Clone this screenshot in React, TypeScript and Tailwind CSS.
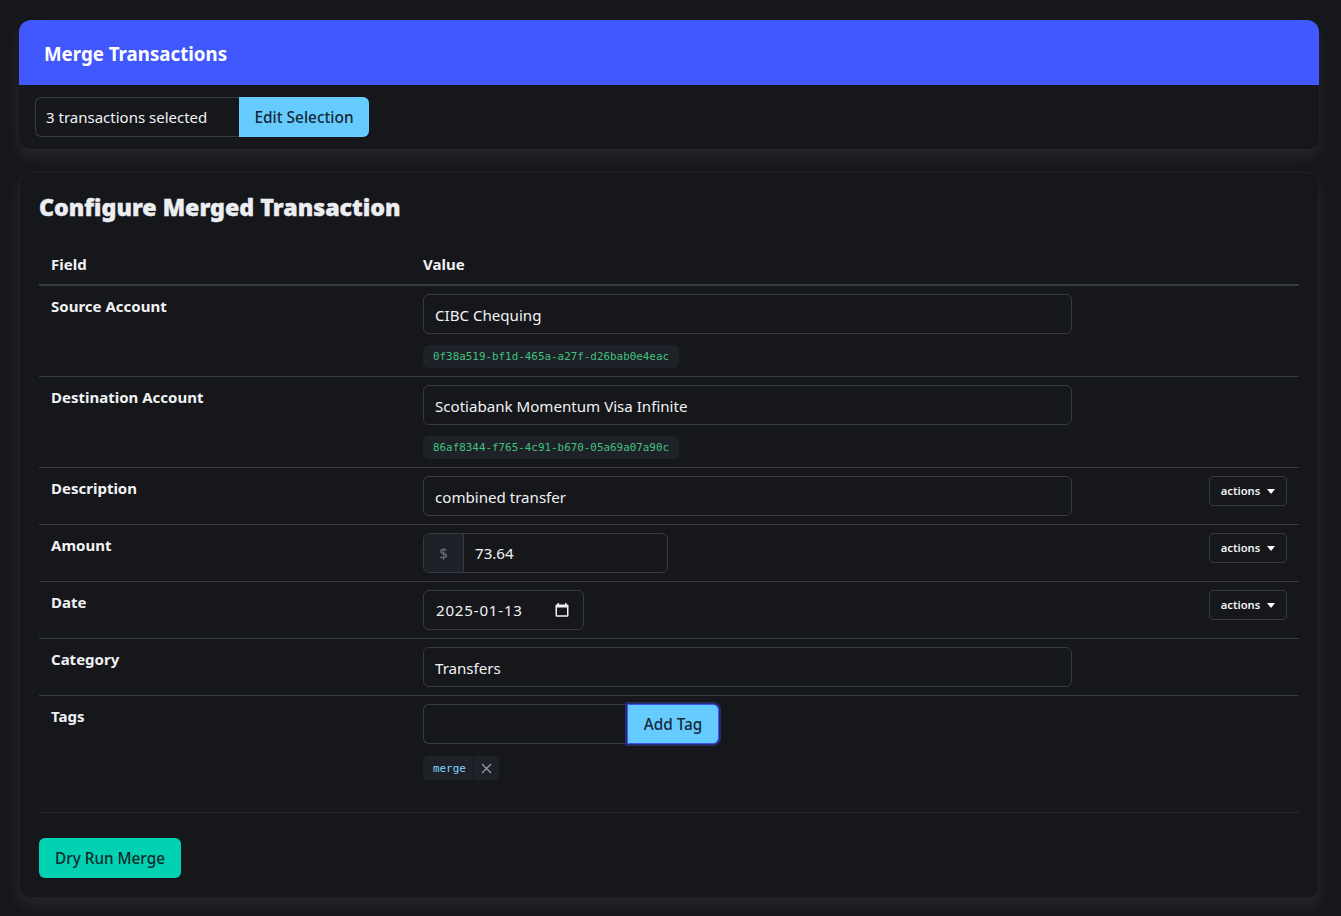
const rowClass = "border-b border-[#373a41] align-top";
const labelClass = "px-3 pt-[8px] font-bold text-[15px] leading-[24px] text-[#f1f2f4]";
const valueClass = "px-3 py-2 align-top";
const inputClass =
  "block h-10 rounded-md border border-[#373a41] bg-transparent pr-3 pl-[11px] pt-[1px] text-[15.1px] text-[#f1f2f4] outline-none";

const ActionsButton = () => (
  <button className="inline-flex h-[30px] w-[78px] items-center justify-center gap-[7px] rounded-[4px] border border-[#373a41] pt-[1px] text-[11.2px] font-semibold text-[#f1f2f4]">
    actions
    <span className="h-0 w-0 border-x-[4px] border-t-[5px] border-x-transparent border-t-white" />
  </button>
);

const IdBadge = ({ id }: { id: string }) => (
  <code className="mt-[11px] block h-[23px] w-fit rounded-md bg-[#1e2128] px-[10px] font-['DejaVu_Sans_Mono',monospace] text-[10.9px] leading-[23px] text-[#42c27f]">
    {id}
  </code>
);

const CalendarIcon = () => (
  <svg width="14" height="14" viewBox="0 0 14 14" className="shrink-0">
    <path
      fillRule="evenodd"
      fill="#f1f2f4"
      d="M2.5 0h1.5v1.5h6V0h1.5v1.5h1A1 1 0 0 1 13.5 2.5v10a1.2 1.2 0 0 1-1.2 1.2H1.7A1.2 1.2 0 0 1 .5 12.5v-10a1 1 0 0 1 1-1h1zM2 4.5v7.7h10V4.5z"
    />
  </svg>
);

export default function App() {
  return (
    <div className="min-h-[916px] bg-[#15171b] px-[19px] pt-5 pb-[18px] font-['Noto_Sans',sans-serif] text-[#f1f2f4]">
      {/* Selection card */}
      <section className="w-[1300px] overflow-hidden rounded-xl bg-[#15171b] shadow-[0_8px_16px_rgba(255,255,255,0.07)]">
        <header className="flex h-[65px] items-center bg-[#4258ff] px-[25px] pt-[3px]">
          <h2 className="text-[18.7px] font-bold text-white">Merge Transactions</h2>
        </header>
        <div className="flex px-4 pt-3 pb-3">
          <span className="flex h-10 w-[204px] items-center rounded-l-md border border-r-0 border-[#373a41] px-[10px] pt-[1px] text-[15px]">
            3 transactions selected
          </span>
          <button className="h-10 w-[130px] rounded-r-md bg-[#66ccff] pt-[1px] text-[15.4px] font-medium text-[#14283a]">
            Edit Selection
          </button>
        </div>
      </section>

      {/* Configure card */}
      <section className="mt-[23px] h-[726px] w-[1300px] rounded-xl border border-[#1e2025] bg-[#15171b] px-[19px] pt-[20px] shadow-[0_8px_16px_rgba(255,255,255,0.07)]">
        <h2 className="text-[23.2px] leading-[28px] font-black text-[#eceef2] [-webkit-text-stroke:0.4px_#eceef2]">
          Configure Merged Transaction
        </h2>

        <table className="mt-[30px] w-[1260px] table-fixed border-collapse">
          <colgroup>
            <col className="w-[372px]" />
            <col className="w-[673px]" />
            <col />
          </colgroup>
          <thead>
            <tr className="border-b-2 border-[#373a41] text-left text-[15px]">
              <th className="h-[34px] px-3 pb-[7px] font-bold">Field</th>
              <th className="h-[34px] px-3 pb-[7px] font-bold">Value</th>
              <th />
            </tr>
          </thead>
          <tbody>
            <tr className={rowClass}>
              <td className={labelClass}>Source Account</td>
              <td className={valueClass}>
                <input readOnly value="CIBC Chequing" className={`${inputClass} w-[649px]`} />
                <IdBadge id="0f38a519-bf1d-465a-a27f-d26bab0e4eac" />
              </td>
              <td />
            </tr>
            <tr className={rowClass}>
              <td className={labelClass}>Destination Account</td>
              <td className={valueClass}>
                <input readOnly value="Scotiabank Momentum Visa Infinite" className={`${inputClass} w-[649px]`} />
                <IdBadge id="86af8344-f765-4c91-b670-05a69a07a90c" />
              </td>
              <td />
            </tr>
            <tr className={rowClass}>
              <td className={labelClass}>Description</td>
              <td className={valueClass}>
                <input readOnly value="combined transfer" className={`${inputClass} w-[649px]`} />
              </td>
              <td className="px-3 py-2 text-right">
                <ActionsButton />
              </td>
            </tr>
            <tr className={rowClass}>
              <td className={labelClass}>Amount</td>
              <td className={valueClass}>
                <div className="flex h-10 w-[245px] rounded-md border border-[#373a41]">
                  <span className="flex w-10 items-center justify-center rounded-l-md border-r border-[#373a41] bg-[#1e2128] text-[15.1px] text-[#6b7280]">
                    $
                  </span>
                  <input readOnly value="73.64" className="w-0 flex-1 bg-transparent pt-[1px] pr-3 pl-[11px] text-[15.1px] outline-none" />
                </div>
              </td>
              <td className="px-3 py-2 text-right">
                <ActionsButton />
              </td>
            </tr>
            <tr className={rowClass}>
              <td className={labelClass}>Date</td>
              <td className={valueClass}>
                <div className="flex h-10 w-[161px] items-center justify-between rounded-md border border-[#373a41] pr-[14px] pl-[12px] text-[15.1px] tracking-[0.8px]">
                  <span>2025-01-13</span>
                  <CalendarIcon />
                </div>
              </td>
              <td className="px-3 py-2 text-right">
                <ActionsButton />
              </td>
            </tr>
            <tr className={rowClass}>
              <td className={labelClass}>Category</td>
              <td className={valueClass}>
                <input readOnly value="Transfers" className={`${inputClass} w-[649px]`} />
              </td>
              <td />
            </tr>
            <tr className="h-[117px] border-b border-[#26282e] align-top">
              <td className={labelClass}>Tags</td>
              <td className={valueClass}>
                <div className="flex">
                  <input readOnly className="h-10 w-[204px] rounded-l-md border border-r-0 border-[#373a41] bg-transparent outline-none" />
                  <button className="h-10 w-[92px] rounded-r-md border border-[#3f55f0] bg-[#66ccff] text-[15.3px] font-medium text-[#14283a] shadow-[0_0_0_2px_#252c6e]">
                    Add Tag
                  </button>
                </div>
                <div className="mt-3 flex h-6 w-[76px] rounded-md bg-[#1e2128]">
                  <code className="w-[51px] border-r border-[#15171b] pl-[10px] pt-[1px] font-['DejaVu_Sans_Mono',monospace] text-[10.9px] leading-6 text-[#7fd4ff]">
                    merge
                  </code>
                  <span className="flex flex-1 items-center justify-center">
                    <svg width="11" height="11" viewBox="0 0 11 11" stroke="#9ca3af" strokeWidth="1.1">
                      <path d="M1 1l9 9M10 1l-9 9" />
                    </svg>
                  </span>
                </div>
              </td>
              <td />
            </tr>
          </tbody>
        </table>

        <button className="mt-[25px] h-10 w-[142px] rounded-md bg-[#00d1b2] text-[15.3px] font-medium text-[#0f2a2a]">
          Dry Run Merge
        </button>
      </section>
    </div>
  );
}
